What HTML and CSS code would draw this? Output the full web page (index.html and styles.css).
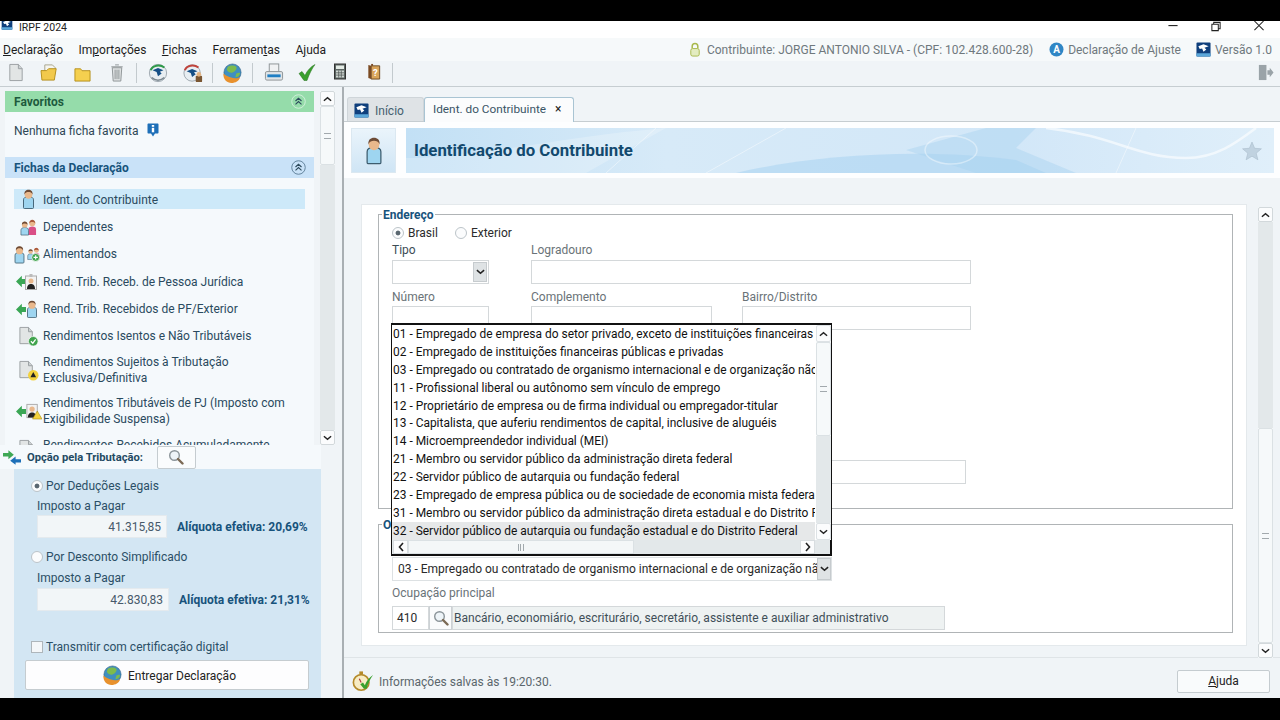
FILE: index.html
```html
<!DOCTYPE html>
<html lang="pt-BR">
<head>
<meta charset="utf-8">
<title>IRPF 2024</title>
<link rel="stylesheet" href="styles.css">
</head>
<body>
<svg class="defs" width="0" height="0" aria-hidden="true">
  <defs>
    <symbol id="logo" viewBox="0 0 16 16"><rect x="0.5" y="0.5" width="15" height="15" rx="1" fill="#0f3f7c"/><rect x="0.5" y="12" width="15" height="3.500" fill="#5ba7d9"/><path d="M2.500 4.500 8 2.500l5.500 2L9 6l2 2-3 2.500L6.500 7 4 7.500z" fill="#fff"/></symbol>
    <symbol id="person" viewBox="0 0 16 22"><path d="M2.500 20.500V12c0-2.500 2-3.500 5.500-3.500s5.500 1 5.500 3.500v8.500c0 .6-.5 1-1 1h-9c-.5 0-1-.4-1-1z" fill="#9ed5f0" stroke="#3d5c6e"/><ellipse cx="8" cy="6" rx="4.300" ry="4.800" fill="#e9b88c"/><path d="M3.500 6C3.200 2.500 5.300.8 8 .8s4.800 1.700 4.500 5.200C11.500 3.800 10 3.200 8 3.200S4.500 3.800 3.500 6z" fill="#6d4b36"/></symbol>
    <symbol id="family" viewBox="0 0 18 18"><path d="M9 17v-6c0-2 1.500-3 4-3s4 1 4 3v6z" fill="#d94f86"/><circle cx="13" cy="4.500" r="3.200" fill="#e9b88c"/><path d="M9.800 4.500c0-5 6.400-5 6.400 0-1.500-1.600-4.900-1.600-6.400 0z" fill="#a9583a"/><path d="M1 17v-5c0-2 1.500-3 4-3s4 1 4 3v5z" fill="#9ed5f0" stroke="#3d5c6e" stroke-width=".7"/><circle cx="5" cy="6" r="3" fill="#e9b88c"/><path d="M2 6c0-4.500 6-4.500 6 0-1.500-1.500-4.500-1.500-6 0z" fill="#6d4b36"/></symbol>
    <symbol id="doc" viewBox="0 0 16 20"><path d="M1.500 1.500h9l4 4.500v12.500h-13z" fill="#e2e5e5" stroke="#9a9fa2"/><path d="M10.500 1.500v4.500h4" fill="#cdd1d2" stroke="#9a9fa2"/></symbol>
    <symbol id="arrow" viewBox="0 0 12 14"><path d="M0 7l7-7v4h5v6H7v4z" fill="#3aa655"/></symbol>
    <symbol id="globe" viewBox="0 0 22 22"><circle cx="11" cy="10" r="9" fill="#3f8fc0" stroke="#2a5c80" stroke-width=".6"/><path d="M6 4c3-2 7-2 9 0 1 2-1 5-4 6-2 1-5-1-6-3zM15 11c2-1 4-1 4 0-1 3-3 4-5 4z" fill="#7dbb4e"/><path d="M1.500 11c3 3 9 5 14 5 2 0 3-.5 3.500-1-1 4-5 6-9 6-5 0-9-4-8.500-10z" fill="#e8912d"/></symbol>
    <symbol id="check" viewBox="0 0 18 18"><path d="M1 10l3-2 3 4c2-5 6-9 10-11-3 4-6 10-8 16H6z" fill="#3aa02e" stroke="#27701f" stroke-width=".5"/></symbol>
    <symbol id="lens" viewBox="0 0 16 16"><circle cx="6.500" cy="6.500" r="4.800" fill="#eef4f8" stroke="#8b9499" stroke-width="1.400"/><path d="M10 10l4.500 4.500" stroke="#7b6a55" stroke-width="2.400" stroke-linecap="round"/></symbol>
    <symbol id="refresh" viewBox="0 0 22 22"><circle cx="11" cy="11" r="9.500" fill="#e8eef2" stroke="#9aa5ac"/><path d="M5 8l6-2.500L17 8l-4 1.500 2 2-4 3-1.500-4.500z" fill="#154f86"/><path d="M3 8C5 2.500 13 1 18 5" fill="none" stroke="#2f9b4a" stroke-width="2.200"/><path d="M4 16c4 4 10 4 14 0" fill="none" stroke="#7d8a92" stroke-width="1.800"/></symbol>
    <symbol id="upl" viewBox="0 0 22 22"><circle cx="10" cy="11" r="9" fill="#e8eef2" stroke="#9aa5ac"/><path d="M4 9l6-2.500L16 9l-4 1.500 2 2-4 3-1.500-4.500z" fill="#154f86"/><path d="M2 8C4 2.500 12 1 17 5" fill="none" stroke="#c0443c" stroke-width="2.200"/><rect x="14" y="14" width="7" height="7" rx="1" fill="#7a5632"/><circle cx="17.500" cy="12.500" r="2.500" fill="#e3b483"/></symbol>
    <symbol id="coll" viewBox="0 0 16 16"><circle cx="8" cy="8" r="7.200" fill="none" stroke="currentColor" stroke-width="1"/><path d="M4.800 7.500 8 4.500l3.200 3M4.800 11 8 8l3.200 3" fill="none" stroke="#2c4a5c" stroke-width="1.200"/></symbol>
  </defs>
</svg>

<div class="letterbox"></div>
<div class="app">
  <header class="titlebar">
    <div class="title-left"><svg class="logo-cut" viewBox="0 3 16 13"><use href="#logo"/></svg><span>IRPF 2024</span></div>
    <div class="winctl">
      <svg class="wc" viewBox="0 0 12 12"><path d="M1 5h10" stroke="#222" stroke-width="1.200"/></svg>
      <svg class="wc" viewBox="0 0 12 12"><path d="M1.500 3.500h7v7h-7zM3.500 3.500v-2h7v7h-2" fill="none" stroke="#222" stroke-width="1.100"/></svg>
      <svg class="wc" viewBox="0 0 12 12"><path d="M1 0l10 10M11 0L1 10" stroke="#222" stroke-width="1.100"/></svg>
    </div>
  </header>

  <div class="menubar">
    <nav class="menu">
      <span><u>D</u>eclaração</span><span>Im<u>p</u>ortações</span><span><u>F</u>ichas</span><span>Ferramen<u>t</u>as</span><span>A<u>j</u>uda</span>
    </nav>
    <div class="status">
      <svg class="lock" viewBox="0 0 12 16"><path d="M3 7V4.500a3 3 0 0 1 6 0V7" fill="none" stroke="#a7b84a" stroke-width="1.600"/><rect x="1.500" y="7" width="9" height="8" rx="2" fill="#e3ecc0" stroke="#a7b84a"/></svg>
      <span class="s1">Contribuinte: JORGE ANTONIO SILVA - (CPF: 102.428.600-28)</span>
      <svg class="aicon" viewBox="0 0 15 15"><circle cx="7.500" cy="7.500" r="7" fill="#2f86c5"/><text x="7.500" y="11" class="aicon-t">A</text></svg>
      <span class="s2">Declaração de Ajuste</span>
      <svg class="ic15"><use href="#logo"/></svg>
      <span class="s3">Versão 1.0</span>
    </div>
  </div>

  <div class="toolbar">
    <div class="tools">
      <svg class="t t1" viewBox="0 0 16 20"><use href="#doc"/></svg>
      <svg class="t t2" viewBox="0 0 22 20"><path d="M5 2h8l3 3v6H5z" fill="#f5f5f0" stroke="#a8a48c"/><path d="M1 8h6l2-2h8l-2 12H2z" fill="#f2c94c" stroke="#b58f1c"/></svg>
      <svg class="t t3" viewBox="0 0 18 16"><path d="M1 2.500h6l1.500 2H17v11H1z" fill="#f5d04f" stroke="#b58f1c"/></svg>
      <svg class="t t4" viewBox="0 0 16 20"><path d="M3 5h10l-1 14H4z" fill="#dfe2e3" stroke="#8d9396"/><path d="M2 4h12M6 2h4M6 7v10M8 7v10M10 7v10" stroke="#8d9396" fill="none"/></svg>
      <i class="sep s-a"></i>
      <svg class="t t5" viewBox="0 0 22 22"><use href="#refresh"/></svg>
      <svg class="t t6" viewBox="0 0 22 22"><use href="#upl"/></svg>
      <i class="sep s-b"></i>
      <svg class="t t7" viewBox="0 0 22 22"><use href="#globe"/></svg>
      <i class="sep s-c"></i>
      <svg class="t t8" viewBox="0 0 20 20"><rect x="5" y="1" width="10" height="9" fill="#f0f2f3" stroke="#8d9396"/><rect x="1" y="9" width="18" height="9" rx="1.500" fill="#dfe4e7" stroke="#8d9396"/><rect x="3" y="12" width="14" height="3" fill="#1f7fc4"/></svg>
      <svg class="t t9" viewBox="0 0 18 18"><use href="#check"/></svg>
      <svg class="t t10" viewBox="0 0 12 16"><rect x=".5" y=".5" width="11" height="15" fill="#5c6664" stroke="#333"/><rect x="2" y="2" width="8" height="3.500" fill="#e4ece6"/><path d="M2 7h8v7H2z" fill="#cfd6d2"/><path d="M2 9.300h8M2 11.600h8M4.700 7v7M7.300 7v7" stroke="#454c4a" stroke-width=".7"/></svg>
      <svg class="t t11" viewBox="0 0 14 18"><path d="M4 3h9v14H4z" fill="#d9a45a" stroke="#6c4a22"/><path d="M1 2l3 1v14l-3-1z" fill="#7b4a22"/><path d="M4 1h2v2H4z" fill="#7b4a22"/><text x="8.500" y="13.500" class="book-t">?</text></svg>
      <i class="sep s-d"></i>
    </div>
    <svg class="exit" viewBox="0 0 18 18"><path d="M2 1h8v16H2z" fill="#9aa3a8"/><path d="M11 6.500h2.500V4l4 5-4 5v-2.500H11z" fill="#9aa3a8"/></svg>
  </div>

  <div class="main">
    <aside class="sidebar">
      <div class="nav-area">
        <div class="nav-col">
          <div class="sec-head green"><span>Favoritos</span><svg class="collapse c-green"><use href="#coll"/></svg></div>
          <div class="fav"><span>Nenhuma ficha favorita</span>
            <svg class="info" viewBox="0 0 12 14"><path d="M1.500.5h9c.6 0 1 .4 1 1v8c0 .6-.4 1-1 1H8l-2 3-2-3H1.500c-.6 0-1-.4-1-1v-8c0-.6.4-1 1-1z" fill="#1d6fb8"/><rect x="4.800" y="2" width="2.400" height="1.800" fill="#fff"/><rect x="4.800" y="4.800" width="2.400" height="4.500" fill="#fff"/></svg>
          </div>
          <div class="sec-head blue"><span>Fichas da Declaração</span><svg class="collapse c-blue"><use href="#coll"/></svg></div>
          <ul class="items">
            <li class="item sel"><span class="ico"><svg class="i-p"><use href="#person"/></svg></span><span class="sel-t">Ident. do Contribuinte</span></li>
            <li class="item"><span class="ico"><svg class="i-f"><use href="#family"/></svg></span><span>Dependentes</span></li>
            <li class="item"><span class="ico ico-multi"><svg class="i-p2"><use href="#person"/></svg><svg class="i-f2" viewBox="0 0 18 20"><use href="#family" width="18" height="18"/><circle cx="12" cy="14" r="5.500" fill="#3fa34d" stroke="#fff"/><path d="M12 11v6M9 14h6" stroke="#fff" stroke-width="1.600"/></svg></span><span>Alimentandos</span></li>
            <li class="item"><span class="ico ico-r"><svg class="i-a"><use href="#arrow"/></svg><svg class="i-b" viewBox="0 0 12 16"><rect x=".5" y="2" width="11" height="13.500" fill="#f2f2f2" stroke="#aaa"/><circle cx="6" cy="7" r="2.500" fill="#e9b88c"/><path d="M2 15c0-4 2-5 4-5s4 1 4 5z" fill="#222"/><rect x="4.500" y="0" width="3" height="3" fill="#bbb"/></svg></span><span>Rend. Trib. Receb. de Pessoa Jurídica</span></li>
            <li class="item"><span class="ico ico-r"><svg class="i-a"><use href="#arrow"/></svg><svg class="i-c"><use href="#person"/></svg></span><span>Rend. Trib. Recebidos de PF/Exterior</span></li>
            <li class="item"><span class="ico"><svg class="i-d" viewBox="0 0 22 22"><use href="#doc" width="17" height="20"/><circle cx="16" cy="16" r="5" fill="#3fa34d" stroke="#fff" stroke-width=".7"/><path d="M13.500 16l2 2 3-4" fill="none" stroke="#fff" stroke-width="1.300"/></svg></span><span>Rendimentos Isentos e Não Tributáveis</span></li>
            <li class="item two"><span class="ico"><svg class="i-d" viewBox="0 0 22 22"><use href="#doc" width="17" height="20"/><circle cx="16" cy="16" r="5.500" fill="#f3d23e"/><path d="M16 12.500l3 5.500h-6z" fill="#222"/></svg></span><span>Rendimentos Sujeitos à Tributação Exclusiva/Definitiva</span></li>
            <li class="item two"><span class="ico ico-r"><svg class="i-a"><use href="#arrow"/></svg><svg class="i-w" viewBox="0 0 18 18"><rect x="2" y="2" width="11" height="14" fill="#f2f2f2" stroke="#aaa"/><circle cx="7.500" cy="7" r="2.800" fill="#e9b88c"/><path d="M3 16c0-4 2-5.500 4.500-5.500S12 12 12 16z" fill="#222"/><path d="M13 9l5 8.500H8z" fill="#f3d23e" stroke="#a58a10" stroke-width=".6"/></svg></span><span>Rendimentos Tributáveis de PJ (Imposto com Exigibilidade Suspensa)</span></li>
            <li class="item cut"><span class="ico"><svg class="i-d" viewBox="0 0 22 22"><use href="#doc" width="17" height="20"/><circle cx="16" cy="16" r="5" fill="#2f86c5"/></svg></span><span>Rendimentos Recebidos Acumuladamente</span></li>
          </ul>
        </div>
        <div class="vscroll side-scroll">
          <b class="sb-btn"><svg viewBox="0 0 10 6"><path d="M1 5l4-3.500L9 5" fill="none" stroke="#222" stroke-width="1.600"/></svg></b>
          <b class="sb-thumb th-side"><i class="grip"></i></b>
          <b class="sb-track"></b>
          <b class="sb-btn"><svg viewBox="0 0 10 6"><path d="M1 1l4 3.500L9 1" fill="none" stroke="#222" stroke-width="1.600"/></svg></b>
        </div>
      </div>

      <div class="tax-head">
        <svg class="swap" viewBox="0 0 20 16"><path d="M0 3h6V0l6 5-6 5V7H0z" fill="#3fa855"/><path d="M20 10h-6V7L8 11.500l6 4.500v-2.500h6z" fill="#1d6fb8"/></svg>
        <strong>Opção pela Tributação:</strong>
        <button class="btn-lens" type="button"><svg class="ic16"><use href="#lens"/></svg></button>
      </div>
      <div class="tax-panel">
        <div class="radio-row"><i class="radio on"></i><span>Por Deduções Legais</span></div>
        <div class="tax-label">Imposto a Pagar</div>
        <div class="tax-row"><span class="amt a1">41.315,85</span><strong>Alíquota efetiva: 20,69%</strong></div>
        <div class="radio-row r2"><i class="radio"></i><span>Por Desconto Simplificado</span></div>
        <div class="tax-label l2">Imposto a Pagar</div>
        <div class="tax-row row2"><span class="amt a2">42.830,83</span><strong>Alíquota efetiva: 21,31%</strong></div>
        <div class="radio-row r3"><i class="chk"></i><span>Transmitir com certificação digital</span></div>
        <button class="btn-send" type="button"><svg class="send-ic" viewBox="0 0 22 22"><use href="#globe"/></svg>Entregar Declaração</button>
      </div>
    </aside>
    <div class="divider"></div>

    <section class="content">
      <div class="tabs">
        <div class="tab off"><svg class="ic15"><use href="#logo"/></svg><span>Início</span></div>
        <div class="tab on"><span>Ident. do Contribuinte</span><span class="x">×</span></div>
      </div>
      <div class="head-band">
        <div class="head-ic"><svg class="big-p"><use href="#person"/></svg></div>
        <div class="banner">
          <svg class="banner-art" viewBox="0 0 868 45" preserveAspectRatio="none">
            <path d="M0 45V30C70 30 160 8 260 0L180 45z" fill="#fff" opacity=".22"/>
            <path d="M330 45C410 26 520 20 610 32L640 45z" fill="#9fcfef" opacity=".45"/>
            <path d="M500 22L580 0h50l-20 20 60 25H570z" fill="#a9d2f0" opacity=".45"/>
            <ellipse cx="545" cy="22" rx="26" ry="14" fill="none" stroke="#fff" stroke-width="1.500" opacity=".4"/>
            <path d="M640 0c70 8 90 30 140 30 30 0 50-15 70-30" fill="none" stroke="#fff" stroke-width="2.500" opacity=".6"/>
            <path d="M250 0L200 45M380 0L300 45M730 0L710 45" stroke="#fff" stroke-width="1" opacity=".45"/>
          </svg>
          <h1>Identificação do Contribuinte</h1>
          <svg class="star" viewBox="0 0 20 20"><path d="M10 1l2.600 6.300 6.800.5-5.200 4.400 1.700 6.600L10 15.200 4.100 18.800l1.700-6.600L.6 7.800l6.800-.5z" fill="#c0d2e0" stroke="#a9bccb" stroke-width=".6"/></svg>
        </div>
      </div>

      <div class="body">
        <div class="panel">
          <fieldset class="fs fs-end">
            <legend>Endereço</legend>
            <div class="radios">
              <span class="radio-row dark"><i class="radio on"></i><span>Brasil</span></span>
              <span class="radio-row dark"><i class="radio"></i><span>Exterior</span></span>
            </div>
            <div class="frow">
              <label class="f w96"><span class="lab dark">Tipo</span><span class="inp sel-inp"><b class="sel-btn"><svg viewBox="0 0 10 6"><path d="M1 1l4 3.500L9 1" fill="none" stroke="#222" stroke-width="1.700"/></svg></b></span></label>
              <label class="f w440"><span class="lab">Logradouro</span><span class="inp"></span></label>
            </div>
            <div class="frow r-num">
              <label class="f w96"><span class="lab">Número</span><span class="inp"></span></label>
              <label class="f w181"><span class="lab">Complemento</span><span class="inp"></span></label>
              <label class="f w229"><span class="lab">Bairro/Distrito</span><span class="inp"></span></label>
            </div>
            <div class="frow r-hidden"><span class="inp wide"></span></div>
          </fieldset>
          <fieldset class="fs fs-ocu">
            <legend>Ocupação</legend>
            <div class="cat-sel"><span>03 - Empregado ou contratado de organismo internacional e de organização não governamental</span><b class="sel-btn"><svg viewBox="0 0 10 6"><path d="M1 1l4 3.500L9 1" fill="none" stroke="#222" stroke-width="1.700"/></svg></b></div>
            <div class="lab ocu-lab">Ocupação principal</div>
            <div class="ocu-row">
              <span class="code">410</span>
              <span class="code-btn"><svg class="ic16"><use href="#lens"/></svg></span>
              <span class="desc">Bancário, economiário, escriturário, secretário, assistente e auxiliar administrativo</span>
            </div>
          </fieldset>

          <div class="popup">
            <div class="popup-top">
              <ul class="plist">
                <li>01 - Empregado de empresa do setor privado, exceto de instituições financeiras</li>
                <li>02 - Empregado de instituições financeiras públicas e privadas</li>
                <li>03 - Empregado ou contratado de organismo internacional e de organização não governamental</li>
                <li>11 - Profissional liberal ou autônomo sem vínculo de emprego</li>
                <li>12 - Proprietário de empresa ou de firma individual ou empregador-titular</li>
                <li>13 - Capitalista, que auferiu rendimentos de capital, inclusive de aluguéis</li>
                <li>14 - Microempreendedor individual (MEI)</li>
                <li>21 - Membro ou servidor público da administração direta federal</li>
                <li>22 - Servidor público de autarquia ou fundação federal</li>
                <li>23 - Empregado de empresa pública ou de sociedade de economia mista federal</li>
                <li>31 - Membro ou servidor público da administração direta estadual e do Distrito Federal</li>
                <li class="hl">32 - Servidor público de autarquia ou fundação estadual e do Distrito Federal</li>
              </ul>
              <div class="vscroll pop-v">
                <b class="sb-btn"><svg viewBox="0 0 10 6"><path d="M1 5l4-3.500L9 5" fill="none" stroke="#222" stroke-width="1.600"/></svg></b>
                <b class="sb-thumb th-pop"><i class="grip"></i></b>
                <b class="sb-track"></b>
                <b class="sb-btn"><svg viewBox="0 0 10 6"><path d="M1 1l4 3.500L9 1" fill="none" stroke="#222" stroke-width="1.600"/></svg></b>
              </div>
            </div>
            <div class="hscroll">
              <b class="hb"><svg viewBox="0 0 6 10"><path d="M5 1L1.500 5 5 9" fill="none" stroke="#222" stroke-width="1.600"/></svg></b>
              <b class="hthumb"><i class="grip-v"></i></b>
              <b class="htrack"></b>
              <b class="hb"><svg viewBox="0 0 6 10"><path d="M1 1l3.500 4L1 9" fill="none" stroke="#222" stroke-width="1.600"/></svg></b>
            </div>
          </div>
        </div>
        <div class="vscroll main-scroll">
          <b class="sb-btn"><svg viewBox="0 0 10 6"><path d="M1 5l4-3.500L9 5" fill="none" stroke="#222" stroke-width="1.600"/></svg></b>
          <b class="sb-track"></b>
          <b class="sb-thumb th-main"><i class="grip"></i></b>
          <b class="sb-btn"><svg viewBox="0 0 10 6"><path d="M1 1l4 3.500L9 1" fill="none" stroke="#222" stroke-width="1.600"/></svg></b>
        </div>
      </div>

      <footer class="foot">
        <div class="saved">
          <svg class="clock" viewBox="0 0 24 22"><circle cx="10" cy="12" r="8.500" fill="#f7ecc4" stroke="#b48a2a" stroke-width="1.800"/><rect x="8" y="0" width="4" height="3" fill="#b48a2a"/><path d="M10 12l-2-4" stroke="#a33" stroke-width="1.200"/><path d="M9 14l3-2 2 3c2-5 5-8 9-11-3 4-6 10-7 15h-3z" fill="#3aa02e"/></svg>
          <span>Informações salvas às 19:20:30.</span>
        </div>
        <button class="btn-help" type="button"><u>A</u>juda</button>
      </footer>
    </section>
  </div>
</div>
<div class="letterbox bottom"></div>
</body>
</html>
```

FILE: styles.css
```css
* { box-sizing: border-box; }
html, body { margin: 0; padding: 0; height: 720px; overflow: hidden; background: #000; }
body { font-family: Roboto, "Noto Sans", "Liberation Sans", sans-serif; font-size: 12px; color: #26475a; }
ul { list-style: none; margin: 0; padding: 0; }
svg { display: block; flex: none; }
.defs { position: absolute; }
.letterbox { height: 21px; background: #000; }
.letterbox.bottom { height: 22px; }
.app { height: 677px; background: #f0f4f7; display: flex; flex-direction: column; overflow: hidden; }
.ic16 { width: 16px; height: 16px; }
.ic15 { width: 15px; height: 15px; }

.titlebar { height: 17px; background: #fff; display: flex; justify-content: space-between; align-items: flex-start; flex: none; }
.title-left { display: flex; align-items: flex-start; gap: 5px; font-size: 10.500px; color: #222; line-height: 13px; }
.logo-cut { width: 14px; height: 12px; }
.winctl { display: flex; gap: 31px; padding-right: 15px; }
.wc { width: 12px; height: 11px; }

.menubar { height: 23px; background: #f6f9fa; display: flex; justify-content: space-between; align-items: center; flex: none; padding: 0 8px 0 3px; }
.menu { display: flex; gap: 15.500px; font-size: 12px; color: #1d1d1d; }
.status { display: flex; align-items: center; color: #6f787d; font-size: 12px; }
.lock { width: 12px; height: 15px; margin-right: 6px; }
.s1 { margin-right: 16px; }
.aicon { width: 15px; height: 15px; margin-right: 4px; }
.aicon-t { font-size: 10px; font-weight: 700; fill: #fff; text-anchor: middle; }
.s2 { margin-right: 15px; }
.s3 { margin-left: 4px; }

.toolbar { height: 26px; background: #f0f4f7; border-bottom: 1px solid #c6cdd1; display: flex; justify-content: space-between; align-items: flex-start; flex: none; padding: 2px 6px 0 0; }
.tools { display: flex; align-items: flex-start; padding-left: 8px; }
.t { height: 19px; width: 19px; }
.t1 { width: 16px; }
.t2 { margin-left: 16px; width: 21px; }
.t3 { margin-left: 13px; width: 17px; height: 16px; margin-top: 3px; }
.t4 { margin-left: 18px; width: 16px; }
.s-a { margin-left: 11px; }
.t5 { margin-left: 11px; width: 20px; height: 20px; }
.t6 { margin-left: 15px; width: 20px; height: 20px; }
.s-b { margin-left: 9px; }
.t7 { margin-left: 9px; width: 21px; height: 21px; }
.s-c { margin-left: 9px; }
.t8 { margin-left: 11px; width: 20px; }
.t9 { margin-left: 14px; width: 18px; }
.t10 { margin-left: 18px; width: 12px; height: 17px; }
.t11 { margin-left: 21px; width: 14px; height: 17px; }
.book-t { font-size: 10px; font-weight: 700; fill: #fff; text-anchor: middle; }
.s-d { margin-left: 11px; }
.sep { width: 1px; height: 20px; background: #c3cace; flex: none; }
.exit { width: 17px; height: 17px; margin-top: 1px; }

.main { flex: 1; display: flex; min-height: 0; }
.sidebar { width: 342px; flex: none; display: flex; flex-direction: column; background: #f0f4f7; }
.nav-area { height: 358px; display: flex; flex: none; padding: 4px 0 0 5px; background: #f0f4f7; }
.nav-col { width: 309px; flex: none; background: #f5f9fc; overflow: hidden; }
.sec-head { height: 21px; display: flex; align-items: center; justify-content: space-between; padding: 0 8px 0 9px; font-weight: 700; font-size: 12px; }
.sec-head.green { background: #95dcaa; color: #1d5a3d; }
.sec-head.blue { background: #c9e2f8; color: #17537c; }
.collapse { width: 15px; height: 15px; }
.c-green { color: #d3f0dc; }
.c-blue { color: #5e7f97; }
.fav { height: 45px; display: flex; align-items: center; gap: 9px; padding: 0 0 8px 9px; color: #2e4756; }
.info { width: 12px; height: 14px; margin-top: -2px; }
.items { padding: 11px 9px 0 9px; }
.item { display: flex; align-items: center; height: 27.300px; color: #2a4a5e; }
.item .ico { width: 29px; flex: none; height: 24px; display: flex; align-items: center; justify-content: center; }
.item.sel { height: 20px; background: #cde9f9; margin-bottom: 4.500px; }
.sel-t { padding-top: 1px; }
.item.two { height: 40.800px; line-height: 16px; }
.item.cut { height: 24px; align-items: flex-start; padding-top: 6px; }
.i-p { width: 15px; height: 20px; }
.i-f { width: 17px; height: 17px; }
.item .ico-multi { justify-content: flex-start; margin: 0 1px 0 -1px; gap: 1px; }
.i-p2 { width: 13px; height: 19px; }
.i-f2 { width: 13px; height: 19px; }
.item .ico-r { justify-content: flex-start; padding-left: 2px; }
.i-a { width: 10px; height: 13px; margin-right: -1px; }
.i-b { width: 12px; height: 16px; }
.i-c { width: 14px; height: 18px; }
.i-d { width: 21px; height: 21px; }
.i-w { width: 17px; height: 18px; }

.vscroll { display: flex; flex-direction: column; background: #f7fafb; flex: none; }
.side-scroll { width: 15px; margin-left: 6px; }
.sb-btn { height: 15px; flex: none; border: 1px solid #d2d8db; border-radius: 2px; background: #fbfcfd; display: flex; align-items: center; justify-content: center; }
.sb-btn svg { width: 9px; height: 6px; }
.sb-thumb { flex: none; background: #f6f9fa; border: 1px solid #dbe1e4; border-radius: 2px; display: flex; align-items: center; justify-content: center; }
.sb-track { flex: 1; background: #e3e8ea; }
.th-side { height: 59px; }
.grip { width: 7px; height: 6px; border-top: 1px solid #a2a9ad; border-bottom: 1px solid #a2a9ad; display: block; background: linear-gradient(#fff0 40%, #a2a9ad 40%, #a2a9ad 60%, #fff0 60%); }

.tax-head { height: 24px; display: flex; align-items: center; flex: none; padding-left: 3px; background: #f5f9fc; margin-right: 21px; }
.tax-head strong { font-size: 11.200px; color: #1f4a63; margin-left: 6px; }
.swap { width: 18px; height: 17px; }
.btn-lens { width: 39px; height: 23px; margin-left: 14px; background: #fafcfd; border: 1px solid #c5ccd0; border-radius: 2px; padding: 0; display: flex; align-items: center; justify-content: center; }
.tax-panel { flex: 1; background: #d3e6f3; margin: 0 21px 0 14px; padding: 9px 0 0 12px; }
.radio-row { display: flex; align-items: center; gap: 3px; color: #2b4f66; height: 16px; }
.radio { width: 12px; height: 12px; border-radius: 50%; background: #fbfcfd; border: 1px solid #bcc4c9; display: block; flex: none; margin-left: 5px; }
.radio.on { background: radial-gradient(circle, #5a6770 0 2px, #fbfcfd 2.800px); }
.chk { width: 12px; height: 12px; border: 1px solid #aeb6bb; background: #f4f7f9; display: block; flex: none; margin-left: 5px; }
.tax-label { margin: 5px 0 0 11px; height: 16px; color: #2b4f66; }
.tax-label.l2 { margin-top: 6px; }
.tax-row { display: flex; align-items: center; margin: 0 0 0 11px; gap: 10px; }
.tax-row.row2 { margin-top: 1px; }
.tax-row strong { font-size: 12px; color: #17537c; }
.amt { height: 23px; background: #f2f6f8; border: 1px solid #e4eaee; text-align: right; padding: 4px 5px 0 0; color: #46596a; }
.a1 { width: 130px; }
.a2 { width: 132px; }
.r2 { margin-top: 11px; }
.r3 { margin-top: 28px; }
.btn-send { display: flex; align-items: center; justify-content: center; gap: 5px; width: 284px; height: 30px; margin: 5px 0 0 -1px; padding: 1px 0 0 4px; background: #fdfdfe; border: 1px solid #c5ccd0; border-radius: 2px; font: inherit; color: #222; }
.send-ic { width: 21px; height: 21px; }

.divider { width: 2px; flex: none; background: #a9afb3; }

.content { flex: 1; min-width: 0; display: flex; flex-direction: column; }
.tabs { height: 35px; flex: none; padding: 11px 0 0 3px; display: flex; align-items: flex-end; border-bottom: 1px solid #c6cdd1; }
.tab { height: 24px; display: flex; align-items: center; }
.tab.off { width: 77px; background: #dfe3e6; border: 1px solid #cfd5d9; border-bottom: 0; border-radius: 3px 3px 0 0; gap: 6px; padding-left: 6px; color: #44606f; padding-top: 2px; }
.tab.on { width: 150px; background: #fbfcfd; border: 1px solid #a9c4d3; border-bottom: 0; border-radius: 3px 3px 0 0; padding-left: 8px; gap: 9px; color: #3a5566; height: 25px; padding-bottom: 3px; margin-bottom: -1px; font-size: 11.800px; }
.x { font-size: 12px; color: #222; }
.head-band { height: 56px; flex: none; background: #fdfeff; padding: 6px 6px 5px 7px; display: flex; gap: 10px; }
.head-ic { width: 45px; background: linear-gradient(#eaf4fb, #cfe5f5); border: 1px solid #dbe8f1; display: flex; align-items: center; justify-content: center; }
.big-p { width: 20px; height: 31px; }
.banner { flex: 1; position: relative; display: flex; align-items: center; justify-content: space-between; padding: 0 12px 0 8px; background: linear-gradient(90deg, #c2e0f5 0, #d7eaf8 30%, #d2e7f8 70%, #e0effa 100%); overflow: hidden; }
.banner-art { position: absolute; inset: 0; width: 100%; height: 100%; }
.banner h1 { margin: -2px 0 0; font-size: 16.800px; font-weight: 700; color: #12496e; position: relative; }
.star { width: 20px; height: 20px; position: relative; }

.body { flex: 1; min-height: 0; display: flex; border-bottom: 1px solid #dfe4e7; }
.panel { width: 884px; margin: 27px 0 12px 18px; background: #fff; flex: none; padding: 2px 13px 0 16px; position: relative; box-shadow: 0 0 0 1px #e4e9ec; }
.fs { margin: 0; padding: 0 13px; border: 1px solid #b0b4b6; min-width: 0; display: block; }
.fs legend { padding: 0 1px; margin-left: -10px; font-weight: 700; color: #17537c; font-size: 12px; line-height: 17px; height: 15px; }
.fs-end { height: 302px; }
.fs-ocu { height: 116px; margin-top: 8px; }
.radios { display: flex; gap: 17px; margin-top: 3px; }
.radios .radio { margin-left: 0; }
.radio-row.dark { color: #2b2b2b; gap: 4px; }
.frow { display: flex; gap: 42px; margin-top: 2px; }
.f { display: flex; flex-direction: column; }
.lab { display: block; height: 17px; line-height: 15px; color: #6a7378; }
.lab.dark { color: #3d4d56; }
.w96 { width: 97px; }
.w440 { width: 440px; }
.w181 { width: 181px; }
.w229 { width: 229px; margin-left: -12px; }
.inp { display: flex; justify-content: flex-end; height: 24px; background: #fff; border: 1px solid #d4d8da; }
.r-num { margin-top: 6px; }
.r-num .lab { height: 16px; }
.sel-inp { padding: 1px; }
.sel-btn { width: 14px; background: #dfe3e5; border: 1px solid #c6cbce; display: flex; align-items: center; justify-content: center; flex: none; }
.sel-btn svg { width: 9px; height: 6px; }
.r-hidden { margin-top: 130px; }
.wide { width: 574px; }
.cat-sel { margin-top: 25px; height: 24px; width: 440px; display: flex; border: 1px solid #dde1e3; padding-left: 5px; color: #2a2a2a; line-height: 22px; }
.cat-sel span { flex: 1; overflow: hidden; white-space: nowrap; }
.ocu-lab { margin-top: 5px; height: 20px; }
.ocu-row { display: flex; height: 24px; width: 553px; line-height: 23px; }
.code { width: 37px; border: 1px solid #d4d8da; padding-left: 4px; color: #2a2a2a; }
.code-btn { width: 23px; border: 1px solid #ccd1d4; display: flex; align-items: center; justify-content: center; background: #fafbfc; }
.desc { flex: 1; background: #eef2f2; border: 1px solid #d4d8da; padding-left: 1px; color: #3f4f58; white-space: nowrap; }

.popup { position: absolute; left: 29px; top: 118px; width: 441px; height: 233px; background: #fff; border: 2px solid #111; border-width: 2px 2px 2px 1.500px; display: flex; flex-direction: column; }
.popup-top { display: flex; height: 215px; flex: none; }
.plist { width: 423px; flex: none; overflow: hidden; color: #111; font-size: 11.950px; }
.plist li { height: 17.900px; line-height: 18px; white-space: nowrap; overflow: hidden; padding-left: 1px; }
.plist li.hl { background: #e6e8e9; }
.pop-v { width: 15px; margin-left: 1px; }
.pop-v .sb-btn { height: 17px; border: 1px solid #dde2e5; }
.th-pop { height: 94px; }
.hscroll { flex: 1; display: flex; background: #e3e8ea; padding: 0 15px 0 1px; }
.hb { width: 15px; background: #fbfcfd; border: 1px solid #d8dde0; display: flex; align-items: center; justify-content: center; flex: none; }
.hb svg { width: 6px; height: 10px; }
.hthumb { width: 226px; background: #f4f7f8; border: 1px solid #dbe1e4; display: flex; align-items: center; justify-content: center; flex: none; }
.htrack { flex: 1; }
.grip-v { width: 7px; height: 7px; display: block; background: repeating-linear-gradient(90deg, #a2a9ad 0 1px, #fff0 1px 2.500px); }

.main-scroll { width: 15px; margin: 29px 0 0 12px; height: 451px; }
.main-scroll .sb-btn { height: 15px; }
.th-main { height: 215px; }

.foot { height: 40px; flex: none; display: flex; align-items: center; justify-content: space-between; padding: 0 10px 0 8px; }
.saved { display: flex; align-items: center; gap: 5px; color: #5b666c; margin-top: 7px; }
.clock { width: 22px; height: 21px; }
.btn-help { width: 93px; height: 23px; background: #f9fbfc; border: 1px solid #c5ccd0; border-radius: 2px; font: inherit; color: #222; margin-top: 6px; }
```
